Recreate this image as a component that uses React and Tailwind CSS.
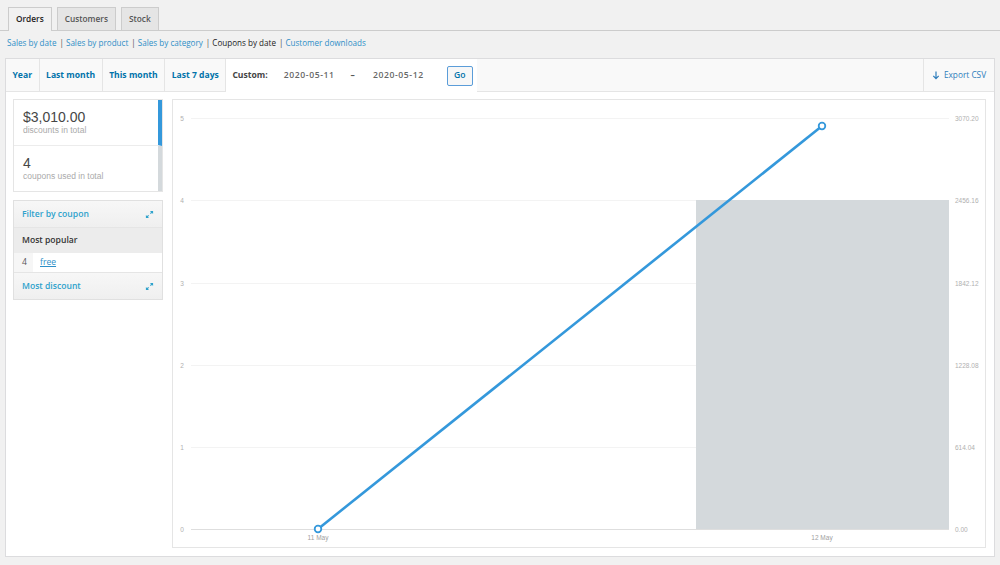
import React from 'react';

const font = { fontFamily: '"Open Sans", "Noto Sans", sans-serif' };
const arial = { fontFamily: '"Liberation Sans", Arial, sans-serif' };

const Expand = () => (
  <svg width="9" height="9" viewBox="0 0 10 10" className="text-[#2ea2cc]">
    <path d="M5.5 1H9v3.5zM4.5 9H1V5.5z" fill="currentColor" />
    <path d="M8 2L6 4M2 8l2-2" stroke="currentColor" strokeWidth="1.3" />
  </svg>
);

const Chart = () => {
  const grid = [18, 100, 183, 265, 347, 429];
  const left = ['5', '4', '3', '2', '1', '0'];
  const right = ['3070.20', '2456.16', '1842.12', '1228.08', '614.04', '0.00'];
  return (
    <svg width="812" height="447" viewBox="0 0 812 447" className="block">
      {grid.map((y, i) => (
        <g key={y}>
          <line x1="18" x2="776" y1={y + 0.5} y2={y + 0.5} stroke={i === 5 ? '#dedede' : '#f3f3f3'} strokeWidth="1" />
          <text x="9" y={y + 2.5} fontSize="6.5" fill="#b0b0b0" textAnchor="middle" style={arial}>{left[i]}</text>
          <text x="782" y={y + 2.5} fontSize="6.5" fill="#b0b0b0" style={arial}>{right[i]}</text>
        </g>
      ))}
      <rect x="523" y="100" width="253" height="329" fill="#d4d9dc" />
      <line x1="145" y1="429" x2="649" y2="26" stroke="#3498db" strokeWidth="2.6" />
      <circle cx="145" cy="429" r="3.3" fill="#fff" stroke="#3498db" strokeWidth="1.8" />
      <circle cx="649" cy="26" r="3.3" fill="#fff" stroke="#3498db" strokeWidth="1.8" />
      <text x="145" y="440" fontSize="6.5" fill="#a0a0a0" textAnchor="middle" style={arial}>11 May</text>
      <text x="649" y="440" fontSize="6.5" fill="#a0a0a0" textAnchor="middle" style={arial}>12 May</text>
    </svg>
  );
};

const App = () => {
  const ranges = ['Year', 'Last month', 'This month', 'Last 7 days'];
  const subs = ['Sales by date', 'Sales by product', 'Sales by category', 'Coupons by date', 'Customer downloads'];

  return (
    <div className="w-[1000px] h-[565px] bg-[#f1f1f1] overflow-hidden" style={font}>
      {/* tabs */}
      <div className="flex items-end gap-[5px] px-[8px] pt-[7px] border-b border-[#cccccc] h-[31px]">
        <div className="h-[24px] px-[7px] flex items-center text-[8.3px] font-semibold text-[#222] bg-[#f1f1f1] border border-[#cccccc] border-b-0 -mb-px pb-px">Orders</div>
        <div className="h-[23px] px-[7px] flex items-center text-[8.3px] font-semibold text-[#555] bg-[#e5e5e5] border border-[#cccccc] border-b-0">Customers</div>
        <div className="h-[23px] px-[7px] flex items-center text-[8.3px] font-semibold text-[#555] bg-[#e5e5e5] border border-[#cccccc] border-b-0">Stock</div>
      </div>

      {/* sub links */}
      <div className="flex items-center px-[7px] h-[24px] text-[8.1px] text-[#2e8fc7]">
        {subs.map((s, i) => (
          <span key={s} className="flex items-center">
            {i > 0 && <span className="text-[#555] ml-[3px] mr-[2px]">|</span>}
            <span className={s === 'Coupons by date' ? 'text-[#222]' : ''}>{s}</span>
          </span>
        ))}
      </div>

      {/* main box */}
      <div className="mx-[5px] mt-[3px] h-[499px] border border-[#dcdcde] bg-white flex flex-col">
        <div className="h-[33px] flex bg-[#f9f9f9] border-b border-[#e5e5e5]">
          {ranges.map((r) => (
            <div key={r} className="px-[6.5px] flex items-center text-[8.6px] font-bold text-[#0073aa] border-r border-[#e5e5e5]">{r}</div>
          ))}
          <div className="w-[251px] bg-white flex items-center pl-[6px] text-[8.6px] -mb-px">
            <span className="font-bold text-[#444]">Custom:</span>
            <span className="ml-[16px] font-semibold text-[#666] tracking-[0.6px]">2020-05-11</span>
            <span className="ml-[16px] font-bold text-[#555]">–</span>
            <span className="ml-[18px] font-semibold text-[#666] tracking-[0.6px]">2020-05-12</span>
            <span className="ml-[23px] w-[26px] h-[20px] flex items-center justify-center border border-[#5b9dd9] rounded-[2px] bg-[#f7f7f7] text-[#0073aa] font-semibold">Go</span>
          </div>
          <div className="flex-1" />
          <div className="w-[71px] border-l border-[#e5e5e5] flex items-center justify-center gap-[4px] text-[8.3px] text-[#2e7dbb]">
            <svg width="8" height="9" viewBox="0 0 8 9">
              <path d="M4 0.5v7M1.3 4.8L4 7.6l2.7-2.8" stroke="#2e7dbb" strokeWidth="1.2" fill="none" />
            </svg>
            <span>Export CSV</span>
          </div>
        </div>

        <div className="flex-1 flex gap-[9px] px-[7px] pt-[7px] pb-[8px]">
          {/* left column */}
          <div className="w-[150px] flex flex-col gap-[8px]">
            <div className="border border-[#e5e5e5] bg-white" style={arial}>
              <div className="h-[46px] border-r-[4px] border-[#3498db] border-b border-b-[#ececec] pl-[9px] pt-[9px]">
                <div className="text-[14px] leading-[16px] text-[#464646]">$3,010.00</div>
                <div className="text-[8.5px] leading-[11px] text-[#aaa]">discounts in total</div>
              </div>
              <div className="h-[45px] border-r-[4px] border-[#d4d9dc] pl-[9px] pt-[9px]">
                <div className="text-[14px] leading-[16px] text-[#464646]">4</div>
                <div className="text-[8.5px] leading-[11px] text-[#aaa]">coupons used in total</div>
              </div>
            </div>

            <div className="border border-[#e0e0e0] bg-white">
              <div className="h-[27px] flex items-center justify-between px-[8px] bg-gradient-to-b from-[#f7f7f7] to-[#efefef] border-b border-[#e5e5e5]">
                <span className="text-[8.6px] font-semibold text-[#2ea2cc]">Filter by coupon</span>
                <Expand />
              </div>
              <div className="h-[25px] flex items-center px-[8px] bg-[#ececec] text-[8.6px] font-semibold text-[#333]">Most popular</div>
              <div className="h-[20px] flex items-center text-[8.6px] border-b border-[#e5e5e5]">
                <span className="w-[19px] h-full flex items-center pl-[8px] bg-[#f6f6f6] text-[#555]">4</span>
                <span className="ml-[7px] text-[#2e8fc7] underline">free</span>
              </div>
              <div className="h-[26px] flex items-center justify-between px-[8px] bg-gradient-to-b from-[#f7f7f7] to-[#efefef]">
                <span className="text-[8.6px] font-semibold text-[#2ea2cc]">Most discount</span>
                <Expand />
              </div>
            </div>
          </div>

          {/* chart */}
          <div className="w-[814px] border border-[#e5e5e5] bg-white">
            <Chart />
          </div>
        </div>
      </div>
    </div>
  );
};

export default App;
